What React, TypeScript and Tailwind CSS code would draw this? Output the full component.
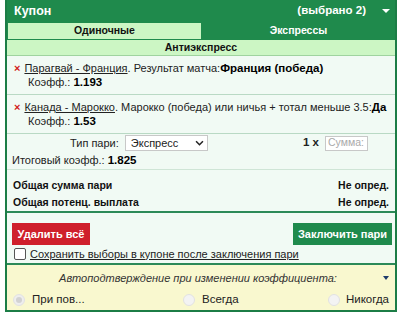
import React from "react";

const font = { fontFamily: '"Liberation Sans", Arial, sans-serif' };

function Selection({ teams, market, pick, odds }: { teams: string; market: string; pick: string; odds: string }) {
  return (
    <div className="h-[39px] border-b border-[#b9d9c4] pl-[7px] pt-[5px] text-[11px] leading-[14px] text-[#222]">
      <div className="flex items-start whitespace-nowrap">
        <span className="mr-[4px] text-[11px] font-bold text-[#d11a1a]">×</span>
        <span>
          <span className="underline">{teams}</span>. {market}:<b className="text-[11.5px] text-black">{pick}</b>
        </span>
      </div>
      <div className="pl-[14px]">
        Коэфф.: <b className="text-[11.5px] text-black">{odds}</b>
      </div>
    </div>
  );
}

export default function App() {
  return (
    <div className="h-[312px] w-[400px] overflow-hidden bg-white pl-[5px] pr-[3px]" style={font}>
      <div className="flex h-[312px] flex-col border-x-2 border-b-2 border-[#1c7d46] bg-[#f1faf4]">
        {/* Header */}
        <div className="flex h-[22px] shrink-0 items-center bg-[#1f8a4c] pl-[7px] pr-[5px] font-bold text-white">
          <span className="text-[12.5px]">Купон</span>
          <span className="ml-auto mr-[16px] text-[11.5px]">(выбрано 2)</span>
          <span className="h-0 w-0 border-x-[4px] border-t-[4px] border-x-transparent border-t-white" />
        </div>

        {/* Tabs */}
        <div className="flex h-[18px] shrink-0 text-[10.5px] font-bold">
          <div className="flex flex-1 items-center justify-center border border-[#1f8a4c] bg-[#ccf6c4] text-[#111]">Одиночные</div>
          <div className="flex flex-1 items-center justify-center bg-[#1f8a4c] text-white">Экспрессы</div>
        </div>
        <div className="flex h-[16px] shrink-0 items-center justify-center border-b border-[#9fd39f] bg-[#ccf6c4] text-[10.5px] font-bold text-[#111]">
          Антиэкспресс
        </div>

        <Selection teams="Парагвай - Франция" market="Результат матча" pick="Франция (победа)" odds="1.193" />
        <Selection
          teams="Канада - Марокко"
          market="Марокко (победа) или ничья + тотал меньше 3.5"
          pick="Да"
          odds="1.53"
        />

        {/* Bet type */}
        <div className="h-[36px] shrink-0 border-b border-[#cfe5d6] pl-[5px] pt-[1px] text-[11px] text-[#222]">
          <div className="flex h-[16px] items-center">
            <span className="ml-[58px] mr-[6px]">Тип пари:</span>
            <div className="flex h-[16px] w-[83px] items-center justify-between border border-[#c8c8c8] bg-white pl-[5px] pr-[3px]">
              <span>Экспресс</span>
              <svg width="9" height="6" viewBox="0 0 10 7">
                <path d="M1 1.5 L5 5.5 L9 1.5" fill="none" stroke="#222" strokeWidth="1.8" />
              </svg>
            </div>
            <span className="ml-auto mr-[6px] text-[11.5px] font-bold">1 x</span>
            <div className="mr-[27px] flex h-[15px] w-[43px] items-center border border-[#c8c8c8] bg-white px-[2px] text-[10.5px] text-[#aaa]">
              Сумма:
            </div>
          </div>
          <div className="mt-[2px] leading-[14px]">
            Итоговый коэфф.: <b className="text-[11.5px] text-black">1.825</b>
          </div>
        </div>

        {/* Totals */}
        <div className="h-[43px] shrink-0 border-b-2 border-[#2c8a58] px-[6px] pt-[7px] text-[10.5px] font-bold leading-[17px] text-[#111]">
          <div className="flex justify-between">
            <span>Общая сумма пари</span>
            <span>Не опред.</span>
          </div>
          <div className="flex justify-between">
            <span>Общая потенц. выплата</span>
            <span>Не опред.</span>
          </div>
        </div>

        {/* Buttons */}
        <div className="flex shrink-0 items-center justify-between pl-[5px] pr-[3px] pt-[10px]">
          <button className="h-[22px] w-[78px] bg-[#cf1f2b] text-[11px] font-bold text-white">Удалить всё</button>
          <button className="h-[22px] w-[99px] bg-[#1f8a4c] text-[11px] font-bold text-white">Заключить пари</button>
        </div>

        {/* Keep selections */}
        <div className="flex h-[20px] shrink-0 items-center border-b-2 border-[#2c8a58] pl-[7px] text-[11px] text-[#222]">
          <span className="mr-[4px] h-[12px] w-[12px] rounded-[2px] border border-[#555] bg-white" />
          <span className="underline">Сохранить выборы в купоне после заключения пари</span>
        </div>

        {/* Auto-confirm */}
        <div className="flex-1 bg-[#f9f8cf] text-[11px] text-[#333]">
          <div className="flex h-[24px] items-center pr-[6px] pt-[2px]">
            <span className="flex-1 pl-[6px] text-center italic">Автоподтверждение при изменении коэффициента:</span>
            <span className="h-0 w-0 border-x-[3.5px] border-t-[4px] border-x-transparent border-t-[#1d3b6b]" />
          </div>
          <div className="flex items-center pl-[6px] pt-[2px] text-[11.5px] text-[#222]">
            <span className="flex w-[170px] items-center">
              <span className="mr-[7px] flex h-[12px] w-[12px] items-center justify-center rounded-full border border-[#e2e2e2] bg-[#eee]">
                <span className="h-[6px] w-[6px] rounded-full bg-[#d2d2d2]" />
              </span>
              При пов...
            </span>
            <span className="flex flex-1 items-center">
              <span className="mr-[7px] h-[12px] w-[12px] rounded-full border border-[#e2e2e2] bg-[#f3f3f3]" />
              Всегда
            </span>
            <span className="flex items-center pr-[6px]">
              <span className="mr-[6px] h-[12px] w-[12px] rounded-full border border-[#e2e2e2] bg-[#f3f3f3]" />
              Никогда
            </span>
          </div>
        </div>
      </div>
    </div>
  );
}
